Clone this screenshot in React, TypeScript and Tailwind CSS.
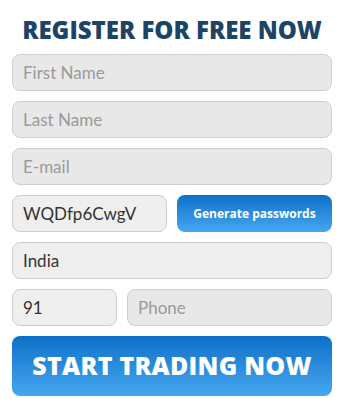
import { useState } from "react";

const field =
  "h-[37px] rounded-[8px] border border-[#cfcfcf] px-[10px] text-[17px] text-[#333] placeholder:text-[#9a9a9a] outline-none [font-family:Lato,'Noto_Sans',sans-serif]";

export default function App() {
  const [password, setPassword] = useState("WQDfp6CwgV");

  const makePassword = () => {
    const chars = "ABCDEFGHJKLMNPQRSTUVWXYZabcdefghijkmnpqrstuvwxyz23456789";
    let out = "";
    for (let i = 0; i < 10; i++) out += chars[Math.floor(Math.random() * chars.length)];
    setPassword(out);
  };

  return (
    <div className="w-[341px] h-[406px] bg-white pl-[12px] pr-[9px] pt-[14px]">
      <h2 className="text-center text-[24px] leading-[32px] font-extrabold text-[#1b4467] [font-family:'Open_Sans',sans-serif]">
        REGISTER FOR FREE NOW
      </h2>
      <form className="mt-[8px] flex flex-col gap-[10px]" onSubmit={(e) => e.preventDefault()}>
        <input className={`${field} w-full bg-[#e8e8e8]`} placeholder="First Name" />
        <input className={`${field} w-full bg-[#e8e8e8]`} placeholder="Last Name" />
        <input className={`${field} w-full bg-[#e8e8e8]`} placeholder="E-mail" />
        <div className="flex gap-[10px]">
          <input
            className={`${field} w-[155px] shrink-0 bg-[#efefef]`}
            value={password}
            onChange={(e) => setPassword(e.target.value)}
          />
          <button
            type="button"
            onClick={makePassword}
            className="h-[37px] w-[155px] shrink-0 rounded-[8px] bg-gradient-to-b from-[#0a70c8] to-[#45a7f1] text-[12px] font-bold text-white [font-family:'Open_Sans',sans-serif]"
          >
            Generate passwords
          </button>
        </div>
        <input className={`${field} w-full bg-[#efefef]`} defaultValue="India" />
        <div className="flex gap-[10px]">
          <input className={`${field} w-[105px] shrink-0 bg-[#efefef]`} defaultValue="91" />
          <input className={`${field} w-[205px] shrink-0 bg-[#e8e8e8]`} placeholder="Phone" />
        </div>
        <button
          type="submit"
          className="h-[60px] w-full rounded-[8px] bg-gradient-to-b from-[#0a70c8] to-[#45a7f1] text-[25px] font-extrabold tracking-[0.25px] text-white [font-family:'Open_Sans',sans-serif]"
        >
          START TRADING NOW
        </button>
      </form>
    </div>
  );
}
